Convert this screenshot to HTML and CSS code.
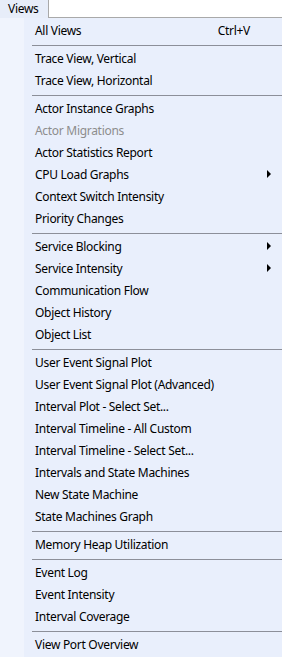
FILE: index.html
```html
<!DOCTYPE html>
<html lang="en">
<head>
    <meta charset="UTF-8">
    <title>Views menu</title>
    <link rel="stylesheet" href="styles.css">
</head>
<body>
    <div class="menubar">
        <div class="tab">Views</div>
        <div class="bar-rest"></div>
    </div>
    <div class="menu">
        <div class="item"><span>All Views</span><span class="shortcut">Ctrl+V</span></div>
        <div class="sep"></div>
        <div class="item">Trace View, Vertical</div>
        <div class="item">Trace View, Horizontal</div>
        <div class="sep"></div>
        <div class="item">Actor Instance Graphs</div>
        <div class="item disabled">Actor Migrations</div>
        <div class="item">Actor Statistics Report</div>
        <div class="item"><span>CPU Load Graphs</span><span class="arrow"></span></div>
        <div class="item">Context Switch Intensity</div>
        <div class="item">Priority Changes</div>
        <div class="sep"></div>
        <div class="item"><span>Service Blocking</span><span class="arrow"></span></div>
        <div class="item"><span>Service Intensity</span><span class="arrow"></span></div>
        <div class="item">Communication Flow</div>
        <div class="item">Object History</div>
        <div class="item">Object List</div>
        <div class="sep"></div>
        <div class="item">User Event Signal Plot</div>
        <div class="item">User Event Signal Plot (Advanced)</div>
        <div class="item">Interval Plot - Select Set...</div>
        <div class="item">Interval Timeline - All Custom</div>
        <div class="item">Interval Timeline - Select Set...</div>
        <div class="item">Intervals and State Machines</div>
        <div class="item">New State Machine</div>
        <div class="item">State Machines Graph</div>
        <div class="sep"></div>
        <div class="item">Memory Heap Utilization</div>
        <div class="sep"></div>
        <div class="item">Event Log</div>
        <div class="item">Event Intensity</div>
        <div class="item">Interval Coverage</div>
        <div class="sep"></div>
        <div class="item">View Port Overview</div>
    </div>
</body>
</html>
```

FILE: styles.css
```css
body {
    margin: 0;
    background-color: #ffffff;
    font-family: 'Noto Sans', 'Open Sans', sans-serif;
    font-size: 12px;
    letter-spacing: -0.3px;
    color: #000000;
}
.menubar {
    display: flex;
    height: 18px;
}
.tab {
    width: 40px;
    padding-left: 8px;
    background-color: #e7edf9;
    border-right: 1px solid #a9a9a9;
    line-height: 17px;
}
.bar-rest {
    flex: 1;
    border-bottom: 1px solid #a9a9a9;
}
.menu {
    padding: 2px 0 1px 0;
    background: linear-gradient(to right, #f0f4fd 24px, #e9effc 24px);
}
.item {
    display: flex;
    align-items: center;
    box-sizing: border-box;
    height: 22px;
    padding: 0 0 2px 35px;
}
.item.disabled {
    color: #8d8d8d;
}
.shortcut {
    margin-left: auto;
    padding-right: 32px;
}
.arrow {
    margin-left: auto;
    margin-right: 11px;
    width: 0;
    height: 0;
    border-top: 4px solid transparent;
    border-bottom: 4px solid transparent;
    border-left: 4px solid #000000;
}
.sep {
    height: 6px;
    margin-left: 32px;
    background: linear-gradient(#8c8f99, #8c8f99) no-repeat 0 3px / 100% 1px;
}
```
